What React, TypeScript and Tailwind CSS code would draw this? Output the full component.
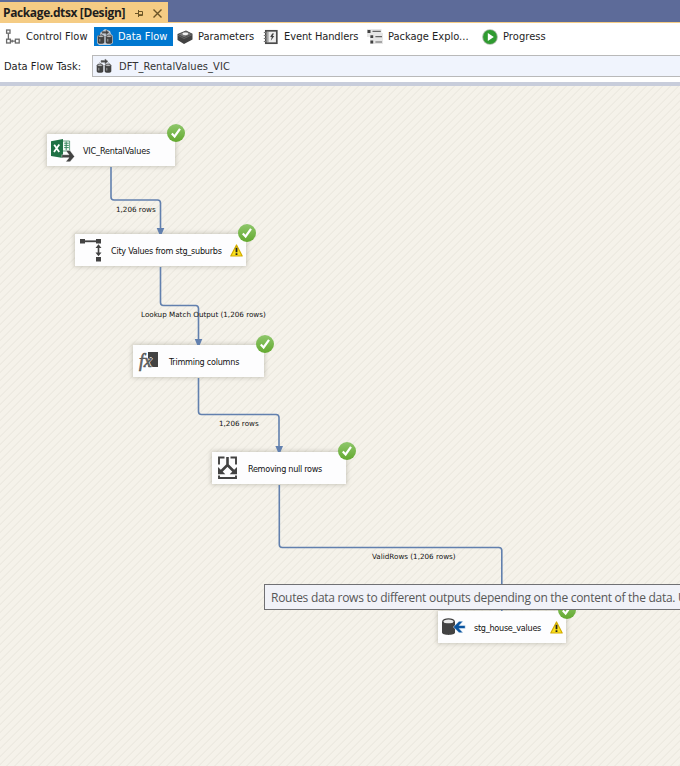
import React from 'react';

const G = '#424242';

function ControlFlowIcon() {
  return (
    <svg width="16" height="16" viewBox="0 0 16 16" fill="none" stroke="#6a6a6a" strokeWidth="1.3">
      <rect x="1.6" y="1" width="3.4" height="3.2" />
      <rect x="1.6" y="10.2" width="3.8" height="3.8" />
      <rect x="10.4" y="10.2" width="3.8" height="3.8" />
      <path d="M3.4 4.500v5.500M5.600 12.200h4.800M7.200 10.800v2.800" />
    </svg>
  );
}

function DataFlowIcon({ light = false }: { light?: boolean }) {
  return (
    <svg width="16" height="16" viewBox="0 0 16 16">
      {light && <path d="M3 4 8 0l5 2 1 3 2 2v7l-3 2H2l-2-2V7l3-1z" fill="#c3cdd8" />}
      <path d="M5 2.600h4V1l3 2.400-3 2.400V4.200H5zM3.400 4.300l2 2M12.300 4.300l1.200 1.600" fill={G} stroke="#777" strokeWidth=".6" />
      <g fill={G}>
        <path d="M.7 7.200v6c0 2 6.600 2 6.600 0v-6z" />
        <path d="M8.700 7.200v6c0 2 6.600 2 6.600 0v-6z" />
      </g>
      <ellipse cx="4" cy="7.200" rx="2.900" ry="1.100" fill="#ddd" stroke={G} strokeWidth=".9" />
      <ellipse cx="12" cy="7.200" rx="2.900" ry="1.100" fill="#ddd" stroke={G} strokeWidth=".9" />
      <path d="M2.800 9.800v2.800M10.800 9.800v2.800" stroke="#aaa" strokeWidth=".9" />
    </svg>
  );
}

function ParametersIcon() {
  return (
    <svg width="16" height="16" viewBox="0 0 16 16">
      <path d="M0.500 5 9 1.400l6.500 3.400v5.600L7 15 .5 11z" fill={G} />
      <path d="M1.600 5.300 9 2.200l5.400 2.700L7 8.300z" fill="#777" />
      <ellipse cx="8.300" cy="4.800" rx="3" ry="1.400" fill="#f2f2f2" />
      <path d="m1 6.300 6 3.200 8-3.800" fill="none" stroke="#777" strokeWidth=".7" />
    </svg>
  );
}

function EventIcon() {
  return (
    <svg width="16" height="16" viewBox="0 0 16 16">
      <rect x="2.800" y="1.800" width="11" height="12.400" fill="#eee" stroke="#4b4b4b" strokeWidth="1.700" />
      <path d="M4.900 2v12" stroke="#777" strokeWidth="1" />
      <path d="M.8 3.500h3M.8 6.500h3M.8 9.500h3M.8 12.500h3" stroke="#777" strokeWidth="1" />
      <path d="M11 4.500H9.200L7.200 8h1.600l-1 3.700L11.300 7H9.600z" fill={G} />
    </svg>
  );
}

function ExplorerIcon() {
  return (
    <svg width="16" height="16" viewBox="0 0 16 16">
      <path d="M0 0h14.500v4H16v11H3V8H0z" fill="#e6e6e6" />
      <path d="M.5 1h3v3h-3zM3.400 6.200h2.800V9H3.400zM3.400 11.600h2.800v2.800H3.400z" fill={G} />
      <path d="M5.500 2.400h8.300M8.400 7.600h6.600M8.400 13h6.600" stroke="#666" strokeWidth="1.200" />
    </svg>
  );
}

function ProgressIcon() {
  return (
    <svg width="16" height="16" viewBox="0 0 16 16">
      <circle cx="8" cy="8" r="7.800" fill="#a6b7a4" />
      <circle cx="8" cy="8" r="6.900" fill="#2f9b30" />
      <path d="m5.800 4 6 4-6 4z" fill="#fff" />
    </svg>
  );
}

function Check() {
  return (
    <svg width="20" height="20" viewBox="0 0 20 20" className="block">
      <defs>
        <linearGradient id="okGreen" x1="0" y1="0" x2="0" y2="1">
          <stop offset="0" stopColor="#8fc76c" />
          <stop offset="1" stopColor="#63a92f" />
        </linearGradient>
      </defs>
      <circle cx="10" cy="10" r="9" fill="url(#okGreen)" />
      <path d="m5.800 10.600 2.800 2.900 5.400-7.600" fill="none" stroke="#fff" strokeWidth="2.200" />
    </svg>
  );
}

function Warning() {
  return (
    <svg width="13" height="13" viewBox="0 0 13 13">
      <path d="M6.500 1 12.200 12H.8z" fill="#fbe11d" stroke="#d3ac00" strokeWidth="1.200" strokeLinejoin="round" />
      <path d="M6.500 3.800v4.400M6.500 9.200v1.800" stroke="#222" strokeWidth="1.800" />
    </svg>
  );
}

function ExcelIcon() {
  return (
    <svg width="24" height="24" viewBox="0 0 24 24">
      <path d="M11 3h7.600v10H11z" fill="#f4faf6" stroke="#3c8a62" strokeWidth=".8" />
      <path d="M13.200 5.200h4.600M13.200 7.400h4.600M13.200 9.600h4.600M15.200 3.500v9" stroke="#3c8a62" strokeWidth="1" />
      <path d="M0 3.200 12 1v19L0 18z" fill="#1f7145" />
      <path d="m3.200 6.700 5 7.300M8.300 6.500 3 14" stroke="#fff" strokeWidth="1.800" />
      <path d="M10.800 16.700h7.200l-3.200-4.200h4.200l4.500 6-4.500 5.300h-4.200l3.200-4.100h-7.200z" fill={G} stroke="#fff" strokeWidth=".4" />
    </svg>
  );
}

function LookupIcon() {
  return (
    <svg width="24" height="24" viewBox="0 0 24 24">
      <path d="M0 0h5v4.600H0zM16 0h5v4.600h-5zM16 18h5v4.600h-5z" fill={G} />
      <path d="M5 2.300h11.500" stroke={G} strokeWidth="1.800" />
      <path d="M18.500 8v7" stroke={G} strokeWidth="1.600" />
      <path d="m18.500 5.200 3 3.900h-6zM18.500 17.300l3-3.900h-6z" fill={G} />
    </svg>
  );
}

function DerivedIcon() {
  return (
    <div className="relative h-[20px] w-[21px]">
      <div className="absolute right-0 top-0 h-[15px] w-[10px] bg-[#424242]" />
      <span className="absolute left-[2px] top-[2px] font-['Liberation_Serif',serif] text-[18px] italic leading-[15px] tracking-[-0.2px] text-[#666] [-webkit-text-stroke:0.6px_#555] [text-shadow:0_0_1px_white,1px_0_0_white,0_-1px_0_white]">
        fx
      </span>
    </div>
  );
}

function SplitIcon() {
  return (
    <svg width="22" height="24" viewBox="0 0 22 24" fill="none" stroke={G}>
      <path d="M7.500 1.500H2v7M13.500 1.500H19v7M2 19.500V22h17v-2.500" strokeWidth="1.900" />
      <path d="M10.500 1v8L4 15.500M10.500 9l6.500 6.500" strokeWidth="2.600" />
      <path d="M1 11v7.300h7.300zM20 11v7.300h-7.300z" fill={G} stroke="none" />
    </svg>
  );
}

function DestIcon() {
  return (
    <svg width="24" height="18" viewBox="0 0 24 18">
      <path d="M0 3.400v11.200c0 3.200 13 3.200 13 0V3.400z" fill={G} />
      <ellipse cx="6.500" cy="3.400" rx="5.700" ry="2.500" fill="#e9e9e9" stroke={G} strokeWidth="1.300" />
      <path d="m11.300 9 5.800-5.800h4L17.200 7.400h6v3.200h-6l3.900 4.200h-4z" fill="#0a55a0" stroke="#fff" strokeWidth=".5" />
    </svg>
  );
}

function Tab({ icon, label, className = '' }: { icon: React.ReactNode; label: string; className?: string }) {
  return (
    <div className={`flex h-[19px] shrink-0 items-center ${className}`}>
      {icon}
      <span className="whitespace-nowrap pt-px">{label}</span>
    </div>
  );
}

type NodeProps = {
  place: string;
  icon: React.ReactNode;
  iconPlace: string;
  label: string;
  labelClass: string;
  warn?: boolean;
};

function FlowNode({ place, icon, iconPlace, label, labelClass, warn }: NodeProps) {
  return (
    <div className={`absolute h-8 bg-[#fdfdfe] shadow-[0_0_4px_1px_rgba(110,105,90,0.3)] ${place}`}>
      <div className={`absolute ${iconPlace}`}>{icon}</div>
      <div className={`flex h-8 items-center whitespace-nowrap pl-9 pt-[3px] text-[9px] text-[#111] ${labelClass}`}>{label}</div>
      {warn && (
        <div className="absolute right-[3px] top-[10px]">
          <Warning />
        </div>
      )}
      <div className="absolute -right-[11px] -top-[11px]">
        <Check />
      </div>
    </div>
  );
}

function EdgeLabel({ place, children }: { place: string; children: string }) {
  return (
    <span className={`absolute whitespace-nowrap font-['DejaVu_Sans',sans-serif] text-[7.2px] leading-3 text-[#111] ${place}`}>
      {children}
    </span>
  );
}

function Arrow({ d }: { d: string }) {
  return <path d={d} fill="#6280ae" />;
}

export default function App() {
  return (
    <div className="flex h-[766px] w-[680px] flex-col overflow-hidden bg-white font-['DejaVu_Sans_Condensed','DejaVu_Sans',sans-serif] text-[11px] text-[#1e1e1e]">
      <div className="flex h-[23px] shrink-0 items-end border-b border-[#f5cc84] bg-[#5d6b99]">
        <div className="flex h-5 w-[168px] items-center bg-[#f5cc84] pl-[3px]">
          <span className="w-[132px] whitespace-nowrap pt-[2px] font-['Open_Sans','Noto_Sans',sans-serif] text-[12px] font-bold tracking-[-0.38px]">
            Package.dtsx [Design]
          </span>
          <svg width="9" height="9" viewBox="0 0 9 9" className="mt-0.5" fill="none" stroke="#6b5426">
            <path d="M0 4.500h3M3.500 1v7M3.500 2.500h4v4h-4M3.500 5.700h4" />
          </svg>
          <svg width="9" height="9" viewBox="0 0 9 9" className="ml-[9px] mt-0.5" fill="none" stroke="#6b5426" strokeWidth="1.400">
            <path d="m.5.5 8 8M8.500.5l-8 8" />
          </svg>
        </div>
      </div>

      <div className="flex h-[27px] shrink-0 items-center">
        <Tab icon={<ControlFlowIcon />} label="Control Flow" className="w-[89px] gap-[5px] pl-[5px]" />
        <Tab icon={<DataFlowIcon light />} label="Data Flow" className="ml-[5px] w-[79px] gap-[5px] bg-[#0078d0] pl-[3px] text-white" />
        <Tab icon={<ParametersIcon />} label="Parameters" className="ml-1 w-[86px] gap-[5px] tracking-[-0.05px]" />
        <Tab icon={<EventIcon />} label="Event Handlers" className="w-[104px] gap-[5px] tracking-[-0.1px]" />
        <Tab icon={<ExplorerIcon />} label="Package Explo..." className="w-[115px] gap-[5px]" />
        <Tab icon={<ProgressIcon />} label="Progress" className="gap-[5px] tracking-[0.08px]" />
      </div>

      <div className="flex h-8 shrink-0 items-center pl-1">
        <span className="w-[88px] whitespace-nowrap pt-[2px]">Data Flow Task:</span>
        <div className="flex h-[22px] flex-1 items-center gap-[7px] border border-r-0 border-[#b9b9b9] bg-[#f0f4fd] pl-[3px]">
          <DataFlowIcon />
          <span className="whitespace-nowrap pt-[2px] tracking-[0.08px] text-[#333]">DFT_RentalValues_VIC</span>
        </div>
      </div>
      <div className="h-1 shrink-0 bg-[#c8cddb]" />

      <div className="relative flex-1 bg-[repeating-linear-gradient(135deg,#f5f2ea_0px,#f5f2ea_3.8px,#edeae1_4.4px,#edeae1_5.1px,#f5f2ea_5.657px)]">
        <FlowNode place="left-[47px] top-[48px] w-[128px]" icon={<ExcelIcon />} iconPlace="left-[4px] top-[4px]" label="VIC_RentalValues" labelClass="tracking-[-0.17px]" />
        <FlowNode place="left-[75px] top-[148px] w-[171px]" icon={<LookupIcon />} iconPlace="left-[5px] top-[5px]" label="City Values from stg_suburbs" labelClass="tracking-[-0.25px]" warn />
        <FlowNode place="left-[133px] top-[259px] w-[131px]" icon={<DerivedIcon />} iconPlace="left-[4px] top-[7px]" label="Trimming columns" labelClass="tracking-[-0.25px]" />
        <FlowNode place="left-[212px] top-[366px] w-[134px]" icon={<SplitIcon />} iconPlace="left-[5px] top-[4px]" label="Removing null rows" labelClass="tracking-[-0.29px]" />
        <FlowNode place="left-[438px] top-[525px] w-[128px]" icon={<DestIcon />} iconPlace="left-[4px] top-[7px]" label="stg_house_values" labelClass="tracking-[-0.27px]" warn />

        <svg width="680" height="680" viewBox="0 86 680 680" className="absolute left-0 top-0">
          <g fill="none" stroke="#6280ae" strokeWidth="1.600">
            <path d="M111 167v30q0 3 3 3h43.500q3 0 3 3v26" />
            <path d="M160.500 267v35.500q0 3 3 3h32q3 0 3 3v31" />
            <path d="M198.500 378v33.500q0 3 3 3h74.500q3 0 3 3v29" />
            <path d="M279.300 485v59.500q0 3 3 3h216.500q3 0 3 3V611" />
          </g>
          <Arrow d="M156.700 228h7.600l-2.500 6h-2.600z" />
          <Arrow d="M194.700 339h7.600l-2.500 6h-2.600z" />
          <Arrow d="M275.400 446h7.600l-2.500 6h-2.600z" />
        </svg>

        <EdgeLabel place="left-[116px] top-[118px]">1,206 rows</EdgeLabel>
        <EdgeLabel place="left-[141px] top-[223px]">Lookup Match Output (1,206 rows)</EdgeLabel>
        <EdgeLabel place="left-[219px] top-[332px]">1,206 rows</EdgeLabel>
        <EdgeLabel place="left-[372px] top-[465px]">ValidRows (1,206 rows)</EdgeLabel>

        <div className="absolute left-[264px] right-0 top-[498px] flex h-[26px] items-center overflow-hidden whitespace-nowrap border border-r-0 border-[#707073] bg-[#f1f2f8] pl-1.5 pt-[2px] font-['Open_Sans','Noto_Sans',sans-serif] text-[12px] tracking-[-0.28px] text-[#575757]">
          Routes data rows to different outputs depending on the content of the data. U
        </div>
      </div>
    </div>
  );
}
